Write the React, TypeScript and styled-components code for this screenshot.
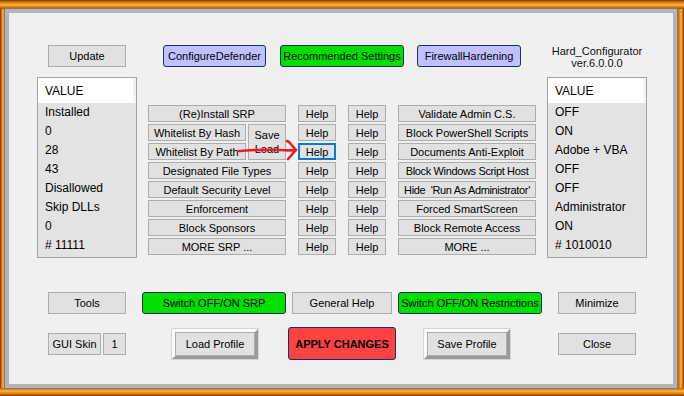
import React from "react";
import styled, { createGlobalStyle, css } from "styled-components";

const GlobalStyle = createGlobalStyle`
  html, body {
    margin: 0;
    padding: 0;
    overflow: hidden;
    background: #f0f0f0;
  }
  body {
    font-family: "Liberation Sans", Arial, sans-serif;
    color: #000;
  }
`;

const bandV = `#5a3010 0, #b65c00 1px, #e88a10 3px, #fab648 5px, #e07800 7px, #a04800 9px`;
const bandH = `#5a3010 0, #b65c00 1px, #e88a10 2px, #fab648 3px, #e07800 5px, #a04800 7px`;

const Frame = styled.div`
  width: 684px;
  height: 396px;
  box-sizing: border-box;
  padding: 9px 7px 8px 5px;
  background-color: #d87000;
  background-image: linear-gradient(to bottom, ${bandV}),
    linear-gradient(to top, ${bandV}), linear-gradient(to right, ${bandH}),
    linear-gradient(to left, ${bandH});
  background-size: 100% 9px, 100% 8px, 5px 100%, 7px 100%;
  background-position: top, bottom, left, right;
  background-repeat: no-repeat;
`;

const Panel = styled.div`
  height: 100%;
  box-sizing: border-box;
  border: 4px solid #b4b4b4;
  box-shadow: 0 0 0 1px #7a7a7a;
  background: #f0f0f0;
  padding: 32px 0 0 28px;
  display: flex;
  flex-direction: column;
`;

const Columns = styled.div<{ $mt?: number }>`
  display: grid;
  grid-template-columns: 100px 388px 100px;
  column-gap: 11px;
  align-items: start;
  margin-top: ${(p) => p.$mt ?? 0}px;
`;

const Center = styled.div`
  display: flex;
  justify-content: center;
`;

const TopButtons = styled.div`
  display: flex;
  gap: 14px;
  padding-left: 15px;
`;

const Title = styled.div`
  text-align: center;
  font-size: 11px;
  line-height: 12px;
  margin-bottom: -2px;
  color: #111;
`;

type Tone = "gray" | "purple" | "green" | "red";

const toneStyles: Record<Tone, ReturnType<typeof css>> = {
  gray: css`
    background: #e1e1e1;
    border: 1px solid #adadad;
  `,
  purple: css`
    background: #c0c0ff;
    border: 1px solid #1c2c66;
    border-radius: 3px;
  `,
  green: css`
    background: #00e000;
    border: 1px solid #1c2c66;
    border-radius: 3px;
  `,
  red: css`
    background: #ff4343;
    border: 1px solid #1c2c66;
    border-radius: 3px;
    font-weight: bold;
  `,
};

const Btn = styled.div<{
  $w?: number;
  $h?: number;
  $ml?: number;
  $tone?: Tone;
  $focus?: boolean;
  $tight?: boolean;
}>`
  box-sizing: border-box;
  width: ${(p) => (p.$w ? `${p.$w}px` : "100%")};
  height: ${(p) => p.$h ?? 17}px;
  margin-left: ${(p) => p.$ml ?? 0}px;
  flex-shrink: 0;
  display: flex;
  align-items: center;
  justify-content: center;
  font-size: 11px;
  white-space: pre;
  overflow: hidden;
  color: #000;
  ${(p) => toneStyles[p.$tone ?? "gray"]}
  ${(p) =>
    p.$tight &&
    css`
      letter-spacing: -0.35px;
    `}
  ${(p) =>
    p.$focus &&
    css`
      border: 2px solid #0a78d7;
    `}
`;

const RaisedBtn = styled(Btn)`
  border-width: 3px;
  border-style: solid;
  border-color: #fbfbfb #9a9a9a #9a9a9a #fbfbfb;
  box-shadow: inset 0 0 0 1px #adadad, 0 0 0 1px #d6d6d6;
`;

const ListBox = styled.div`
  width: 100px;
  height: 181px;
  box-sizing: border-box;
  border: 1px solid #a3a3a3;
  background: #e3e3e3;
  display: flex;
  flex-direction: column;
  font-size: 12px;
`;

const ListHeader = styled.div`
  height: 25px;
  flex-shrink: 0;
  background: #fff;
  border-right: 3px solid #f3f3f3;
  padding-left: 7px;
  display: flex;
  align-items: center;
`;

const ListItem = styled.div`
  height: 19px;
  line-height: 19px;
  padding-left: 7px;
  white-space: nowrap;
`;

const Middle = styled.div`
  position: relative;
  padding-top: 28px;
  display: flex;
  gap: 12px;
`;

const Col = styled.div<{ $w: number }>`
  width: ${(p) => p.$w}px;
  display: flex;
  flex-direction: column;
  gap: 2px;
`;

const Split = styled.div`
  display: grid;
  grid-template-columns: 98px 38px;
  grid-template-rows: 17px 17px;
  gap: 2px;
`;

const TwoLine = styled(Btn)`
  grid-row: span 2;
  height: 36px;
  flex-direction: column;
  line-height: 14px;
`;

// red hand-drawn arrow pointing at the focused Help button
const Arrow = styled.svg`
  position: absolute;
  left: 88px;
  top: 57px;
  overflow: visible;
`;

const BottomRow = styled.div<{ $mt: number; $h: number }>`
  display: flex;
  align-items: center;
  height: ${(p) => p.$h}px;
  margin-top: ${(p) => p.$mt}px;
`;

const leftValues = ["Installed", "0", "28", "43", "Disallowed", "Skip DLLs", "0", "# 11111"];
const rightValues = ["OFF", "ON", "Adobe + VBA", "OFF", "OFF", "Administrator", "ON", "# 1010010"];
const srpButtons = ["Designated File Types", "Default Security Level", "Enforcement", "Block Sponsors", "MORE SRP ..."];
const restrictButtons = [
  "Validate Admin C.S.",
  "Block PowerShell Scripts",
  "Documents Anti-Exploit",
  "Block Windows Script Host",
  "Hide  'Run As Administrator'",
  "Forced SmartScreen",
  "Block Remote Access",
  "MORE ...",
];

const ValueList = ({ values }: { values: string[] }) => (
  <ListBox>
    <ListHeader>VALUE</ListHeader>
    {values.map((v, i) => (
      <ListItem key={i}>{v}</ListItem>
    ))}
  </ListBox>
);

const HelpCol = ({ focusAt }: { focusAt?: number }) => (
  <Col $w={38}>
    {Array.from({ length: 8 }).map((_, i) => (
      <Btn key={i} $focus={i === focusAt}>
        Help
      </Btn>
    ))}
  </Col>
);

export default function App() {
  return (
    <>
      <GlobalStyle />
      <Frame>
        <Panel>
          <Columns>
            <Center>
              <Btn $w={78} $h={22}>
                Update
              </Btn>
            </Center>
            <TopButtons>
              <Btn $w={103} $h={22} $tone="purple">
                ConfigureDefender
              </Btn>
              <Btn $w={124} $h={22} $tone="green">
                Recommended Settings
              </Btn>
              <Btn $w={104} $h={22} $ml={-1} $tone="purple">
                FirewallHardening
              </Btn>
            </TopButtons>
            <Title>
              Hard_Configurator
              <br />
              ver.6.0.0.0
            </Title>
          </Columns>

          <Columns $mt={10}>
            <ValueList values={leftValues} />
            <Middle>
              <Col $w={138}>
                <Btn>(Re)Install SRP</Btn>
                <Split>
                  <Btn>Whitelist By Hash</Btn>
                  <TwoLine>
                    <span>Save</span>
                    <span>Load</span>
                  </TwoLine>
                  <Btn>Whitelist By Path</Btn>
                </Split>
                {srpButtons.map((t) => (
                  <Btn key={t}>{t}</Btn>
                ))}
              </Col>
              <HelpCol focusAt={2} />
              <HelpCol />
              <Col $w={138}>
                {restrictButtons.map((t) => (
                  <Btn key={t} $tight={t.startsWith("Hide") || t.startsWith("Block Windows")}>
                    {t}
                  </Btn>
                ))}
              </Col>
              <Arrow width="64" height="26" viewBox="0 0 64 26">
                <path
                  d="M3 17 C 18 16, 30 15, 44 16 S 56 16, 60 16"
                  fill="none"
                  stroke="#ec1c24"
                  strokeWidth="2.6"
                  strokeLinecap="round"
                />
                <path
                  d="M51 7 L53 8 L60 16 L52 25"
                  fill="none"
                  stroke="#ec1c24"
                  strokeWidth="2.6"
                  strokeLinecap="round"
                  strokeLinejoin="round"
                />
              </Arrow>
            </Middle>
            <ValueList values={rightValues} />
          </Columns>

          <BottomRow $mt={34} $h={22}>
            <Btn $w={78} $h={22} $ml={11}>
              Tools
            </Btn>
            <Btn $w={144} $h={22} $ml={16} $tone="green">
              Switch OFF/ON SRP
            </Btn>
            <Btn $w={100} $h={22} $ml={6}>
              General Help
            </Btn>
            <Btn $w={144} $h={22} $ml={6} $tone="green">
              Switch OFF/ON Restrictions
            </Btn>
            <Btn $w={78} $h={22} $ml={16}>
              Minimize
            </Btn>
          </BottomRow>

          <BottomRow $mt={13} $h={33}>
            <Btn $w={53} $h={22} $ml={11}>
              GUI Skin
            </Btn>
            <Btn $w={23} $h={22} $ml={2}>
              1
            </Btn>
            <RaisedBtn $w={86} $h={30} $ml={46}>
              Load Profile
            </RaisedBtn>
            <Btn $w={108} $h={33} $ml={30} $tone="red">
              APPLY CHANGES
            </Btn>
            <RaisedBtn $w={86} $h={30} $ml={28}>
              Save Profile
            </RaisedBtn>
            <Btn $w={78} $h={22} $ml={48}>
              Close
            </Btn>
          </BottomRow>
        </Panel>
      </Frame>
    </>
  );
}
